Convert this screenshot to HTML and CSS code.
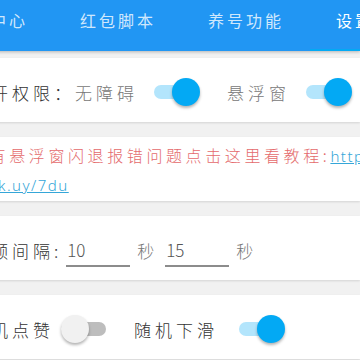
FILE: index.html
```html
<!DOCTYPE html>
<html lang="zh-CN">
<head>
    <meta charset="UTF-8">
    <meta name="viewport" content="width=device-width, initial-scale=1.0">
    <title>设置</title>
    <link rel="stylesheet" href="styles.css">
</head>
<body>

    <div class="tabs">
        <div class="tab">个人中心</div>
        <div class="tab">红包脚本</div>
        <div class="tab">养号功能</div>
        <div class="tab active">设置</div>
    </div>

    <div class="content">
        <div class="card">
            <span class="label">打开权限：</span>
            <span class="muted">无障碍</span>
            <span class="switch on gap-16"></span>
            <span class="muted gap-27">悬浮窗</span>
            <span class="switch on gap-16"></span>
        </div>

        <div class="card notice">
            <div>如有悬浮窗闪退报错问题点击这里看教程:<a href="#">https://</a></div>
            <div><a href="#">url.k.uy/7du</a></div>
        </div>

        <div class="card">
            <span class="label">视频间隔:</span>
            <input class="num gap-4" type="text" value="10">
            <span class="muted gap-7">秒</span>
            <input class="num gap-7" type="text" value="15">
            <span class="muted gap-7">秒</span>
        </div>

        <div class="card">
            <span class="label">随机点赞</span>
            <span class="switch gap-7"></span>
            <span class="label gap-27">随机下滑</span>
            <span class="switch on gap-21"></span>
        </div>
    </div>

</body>
</html>
```

FILE: styles.css
```css
*{
    margin: 0px;
    padding: 0px;
    box-sizing: border-box;
}
body {
    font-family: "Noto Sans CJK SC", "Noto Sans", sans-serif;
    background-color: #f1f1f1;
    width: 360px;
    height: 360px;
    overflow: hidden;
}
.tabs {
    display: flex;
    height: 51px;
    margin-left: -74px;
    background-color: #2196f3;
    box-shadow: 0 1px 3px rgba(0, 0, 0, .25);
}
.tab {
    flex: none;
    height: 51px;
    padding: 10px 26px 0 26px;
    font-size: 16px;
    line-height: 20px;
    letter-spacing: 3px;
    color: rgba(255, 255, 255, .8);
}
.tab.active {
    color: #fff;
    border-bottom: 2px solid #03a9f4;
}
.content {
    padding-top: 7px;
}
.card {
    display: flex;
    align-items: center;
    height: 64px;
    margin: 0 0 15px -30px;
    padding-top: 4px;
    background-color: #fff;
    box-shadow: 0 1px 2px rgba(0, 0, 0, .12);
    white-space: nowrap;
    overflow: hidden;
    font-size: 17px;
    font-weight: 300;
    letter-spacing: 4px;
    color: #333;
}
.muted {
    color: #777;
}
.notice {
    display: block;
    padding-top: 4px;
    font-size: 16px;
    letter-spacing: 3.6px;
    line-height: 28px;
    color: #e46a6c;
}
.notice a {
    font-family: "Noto Sans", sans-serif;
    font-size: 15px;
    letter-spacing: 1.5px;
    color: #35a6d8;
    text-decoration: underline;
}
.num {
    flex: none;
    width: 64px;
    padding: 6px 0 5px 1px;
    border: none;
    border-bottom: 2px solid #8c8c8c;
    background: transparent;
    font-family: inherit;
    font-size: 17px;
    font-weight: 300;
    line-height: 20px;
    color: #555;
    outline: none;
}
.switch {
    position: relative;
    flex: none;
    width: 46px;
    height: 28px;
}
.switch::before {
    content: "";
    position: absolute;
    left: 0;
    right: 1px;
    top: 7px;
    height: 14px;
    border-radius: 7px;
    background-color: #bdbdbd;
}
.switch::after {
    content: "";
    position: absolute;
    left: 0;
    top: 0;
    width: 28px;
    height: 28px;
    border-radius: 50%;
    background-color: #f1f1f1;
    box-shadow: 0 2px 3px rgba(0, 0, 0, .3);
}
.switch.on::before {
    background-color: #b3e5fc;
}
.switch.on::after {
    left: 18px;
    background-color: #03a9f4;
}
.gap-4 { margin-left: 4px; }
.gap-7 { margin-left: 7px; }
.gap-16 { margin-left: 16px; }
.gap-21 { margin-left: 21px; }
.gap-27 { margin-left: 27px; }
```
